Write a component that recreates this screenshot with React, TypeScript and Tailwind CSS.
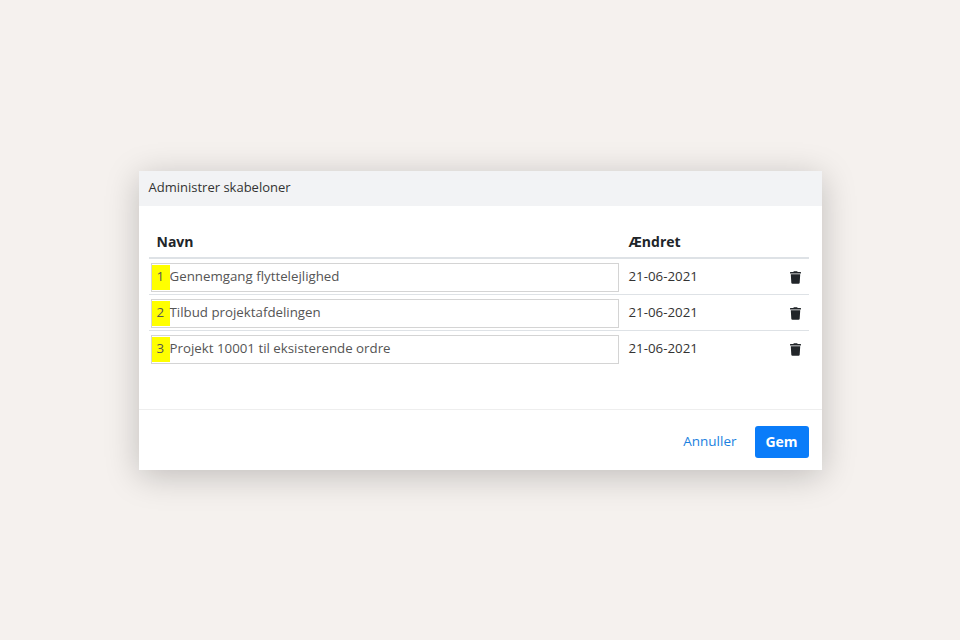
import { FaTrash } from "react-icons/fa";

const templates = [
  { id: 1, name: "Gennemgang flyttelejlighed", changed: "21-06-2021" },
  { id: 2, name: "Tilbud projektafdelingen", changed: "21-06-2021" },
  { id: 3, name: "Projekt 10001 til eksisterende ordre", changed: "21-06-2021" },
];

export default function App() {
  return (
    <div
      className="flex min-h-screen items-center justify-center bg-[#f5f1ee]"
      style={{ fontFamily: '"Open Sans", "Noto Sans", sans-serif' }}
    >
      <div className="w-[683px] bg-white shadow-[0_6px_32px_rgba(0,0,0,0.22)]">
        {/* Header */}
        <div className="flex h-[35px] items-center bg-[#f2f3f5] px-[10px] text-[13px] text-[#333]">
          Administrer skabeloner
        </div>

        {/* Body */}
        <div className="pb-[43px] pl-[10px] pr-[13px] pt-[20px]">
          <table className="w-full border-collapse text-[13.3px]">
            <thead>
              <tr className="border-b-2 border-[#dee2e6]">
                <th className="h-[32px] pl-[8px] text-left text-[14px] font-bold text-[#212529]">Navn</th>
                <th className="w-[150px] pl-[8px] text-left text-[14px] font-bold text-[#212529]">Ændret</th>
                <th className="w-[38px]"></th>
              </tr>
            </thead>
            <tbody>
              {templates.map((t, i) => (
                <tr key={t.id} className={i < templates.length - 1 ? "border-b border-[#dee2e6]" : ""}>
                  <td className="px-[2px] pb-[2px] pt-[4px]">
                    <div className="flex h-[29px] items-center border border-[#d4d4d4] py-px text-[#555]">
                      <span className="flex h-full w-[18px] shrink-0 items-center bg-[#ffff00] pl-[5px]">
                        {t.id}
                      </span>
                      <span className="whitespace-nowrap">{t.name}</span>
                    </div>
                  </td>
                  <td className="pl-[8px] pt-[2px] text-[#333]">{t.changed}</td>
                  <td className="pr-[8px] pt-[2px] text-right">
                    <FaTrash className="ml-auto h-[13px] w-[11px] text-[#212529]" />
                  </td>
                </tr>
              ))}
            </tbody>
          </table>
        </div>

        {/* Footer */}
        <div className="flex h-[61px] items-end justify-end gap-[18px] border-t border-[#eeeeee] pb-[12px] pr-[13px]">
          <span className="flex h-[32px] items-center text-[13.5px] text-[#1a7fe0]">Annuller</span>
          <button className="h-[32px] w-[54px] rounded-[3px] bg-[#0a7cf9] text-[14px] font-bold text-white">
            Gem
          </button>
        </div>
      </div>
    </div>
  );
}
